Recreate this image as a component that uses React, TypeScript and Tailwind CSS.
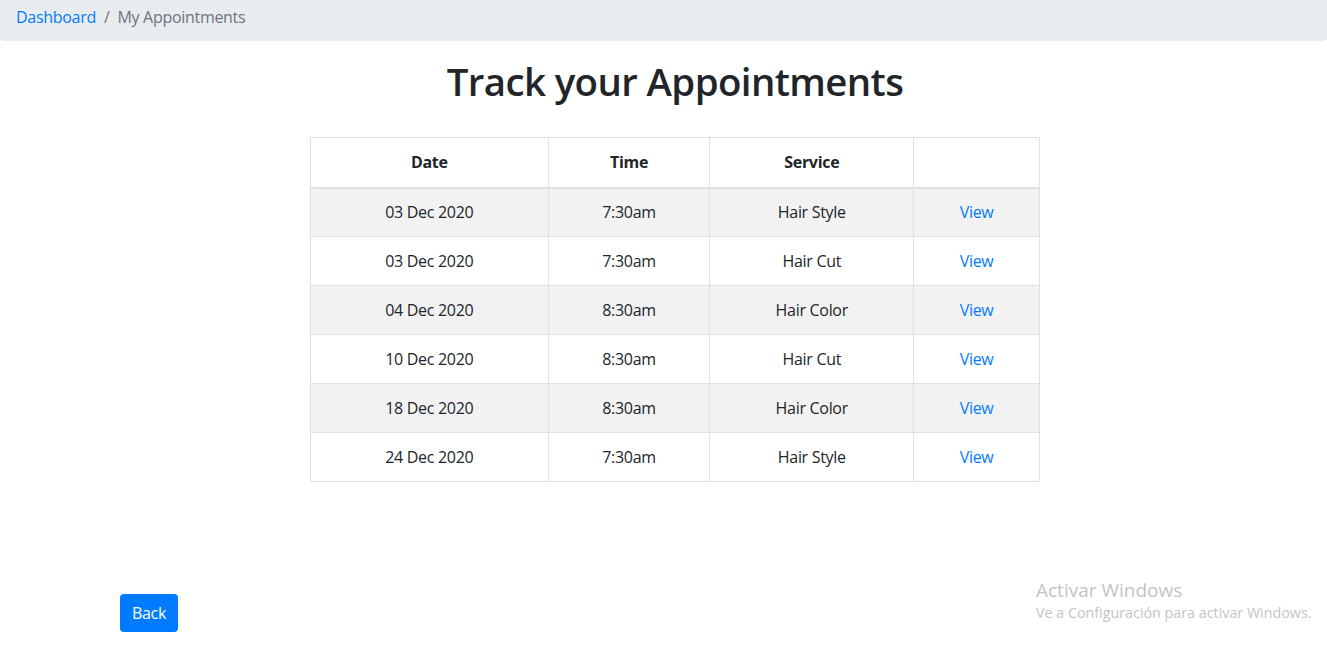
const rows = [
  { date: "03 Dec 2020", time: "7:30am", service: "Hair Style" },
  { date: "03 Dec 2020", time: "7:30am", service: "Hair Cut" },
  { date: "04 Dec 2020", time: "8:30am", service: "Hair Color" },
  { date: "10 Dec 2020", time: "8:30am", service: "Hair Cut" },
  { date: "18 Dec 2020", time: "8:30am", service: "Hair Color" },
  { date: "24 Dec 2020", time: "7:30am", service: "Hair Style" },
];

export default function App() {
  return (
    <div
      className="relative h-[650px] w-full overflow-hidden bg-white text-[16px] tracking-[-0.3px] text-[#212529]"
      style={{ fontFamily: '"Segoe UI", "Open Sans", "Noto Sans", sans-serif' }}
    >
      <nav className="flex h-[41px] items-center rounded-b-[4px] bg-[#e9ecef] px-4 pb-[7px]">
        <a className="text-[#007bff]">Dashboard</a>
        <span className="px-2 text-[#6c757d]">/</span>
        <span className="text-[#6c757d]">My Appointments</span>
      </nav>

      <div className="flex flex-col items-center pl-[23px]">
        <h1 className="mt-[16px] mb-[32px] h-[48px] text-[38.4px] leading-[48px] font-semibold tracking-[-0.6px]">
          Track your Appointments
        </h1>

        <table className="w-[730px] border-collapse border border-[#dee2e6] text-center">
          <thead>
            <tr className="h-[50px]">
              <th className="w-[238px] border border-b-2 border-[#dee2e6] font-bold">Date</th>
              <th className="w-[162px] border border-b-2 border-[#dee2e6] font-bold">Time</th>
              <th className="w-[204px] border border-b-2 border-[#dee2e6] font-bold">Service</th>
              <th className="w-[126px] border border-b-2 border-[#dee2e6]"></th>
            </tr>
          </thead>
          <tbody>
            {rows.map((r, i) => (
              <tr key={i} className={i % 2 === 0 ? "h-[49px] bg-[#f2f2f2]" : "h-[49px] bg-white"}>
                <td className="border border-[#dee2e6]">{r.date}</td>
                <td className="border border-[#dee2e6]">{r.time}</td>
                <td className="border border-[#dee2e6]">{r.service}</td>
                <td className="border border-[#dee2e6]">
                  <a className="text-[#007bff]">View</a>
                </td>
              </tr>
            ))}
          </tbody>
        </table>
      </div>

      <div className="mt-[112px] pl-[120px]">
        <button className="h-[38px] w-[58px] rounded-[4px] bg-[#007bff] text-white">Back</button>
      </div>

      <div className="absolute top-[577px] left-[1036px] tracking-normal text-[#c4c4c4]">
        <div className="text-[19px] leading-[26px]">Activar Windows</div>
        <div className="text-[14.3px] leading-[20px]">Ve a Configuración para activar Windows.</div>
      </div>
    </div>
  );
}
